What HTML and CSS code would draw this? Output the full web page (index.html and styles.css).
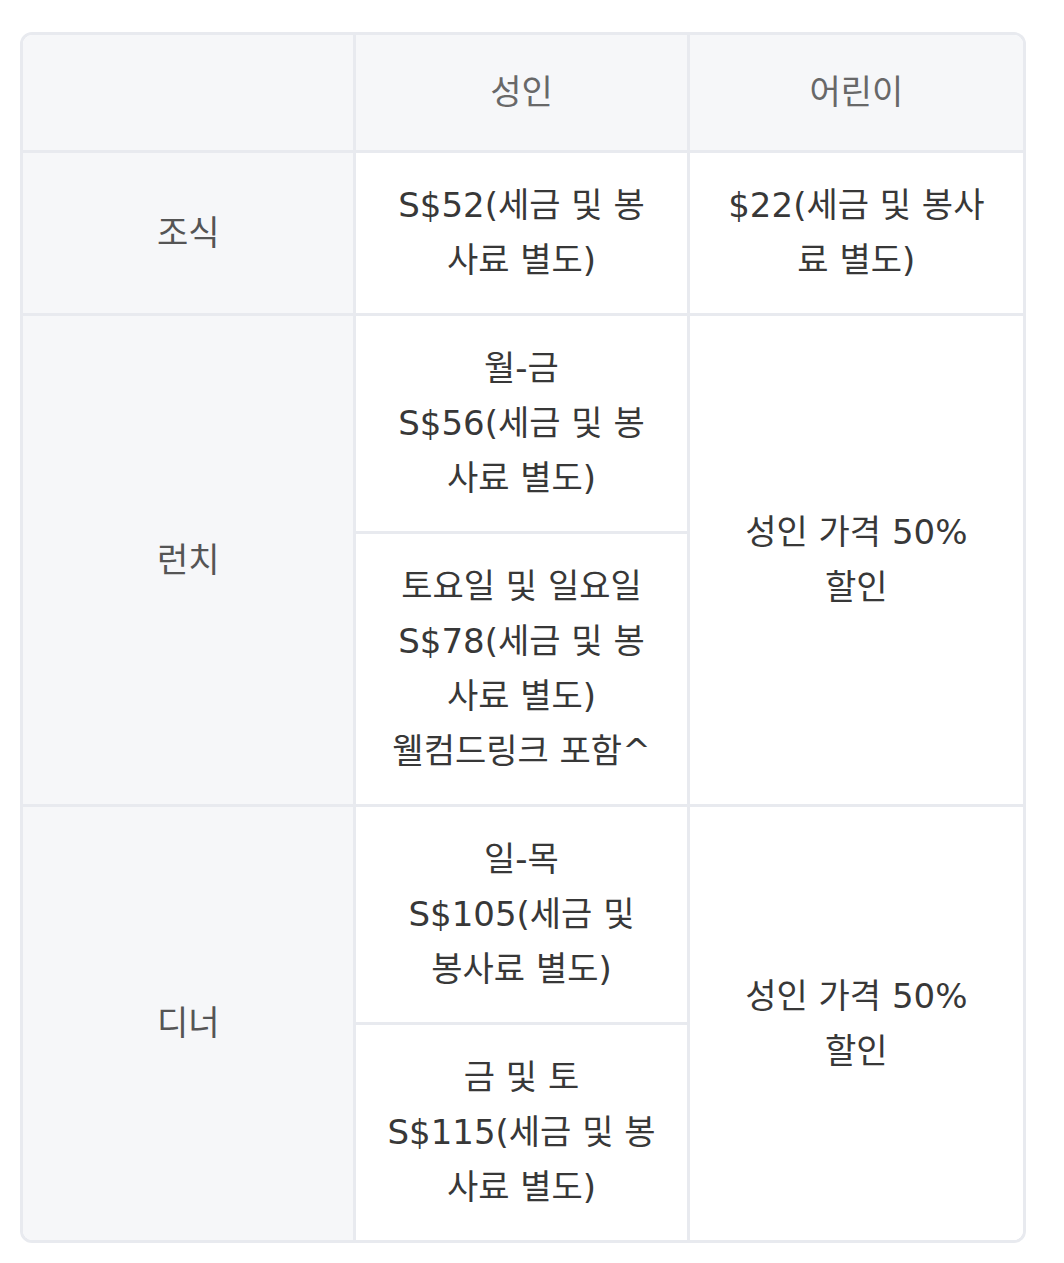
FILE: index.html
```html
<!DOCTYPE html>
<html lang="ko">
<head>
<meta charset="utf-8">
<link rel="stylesheet" href="styles.css">
</head>
<body>
<div class="wrap">
<table class="price">
  <colgroup><col class="c"><col class="c"><col class="c"></colgroup>
  <thead>
    <tr>
      <th class="head"></th>
      <th class="head">성인</th>
      <th class="head last">어린이</th>
    </tr>
  </thead>
  <tbody>
    <tr>
      <th class="meal">조식</th>
      <td>S$52(세금 및 봉<br>사료 별도)</td>
      <td class="last">$22(세금 및 봉사<br>료 별도)</td>
    </tr>
    <tr>
      <th class="meal" rowspan="2">런치</th>
      <td>월-금<br>S$56(세금 및 봉<br>사료 별도)</td>
      <td class="last" rowspan="2">성인 가격 50%<br>할인</td>
    </tr>
    <tr>
      <td>토요일 및 일요일<br>S$78(세금 및 봉<br>사료 별도)<br>웰컴드링크 포함^</td>
    </tr>
    <tr>
      <th class="meal bottom" rowspan="2">디너</th>
      <td>일-목<br>S$105(세금 및<br>봉사료 별도)</td>
      <td class="last bottom" rowspan="2">성인 가격 50%<br>할인</td>
    </tr>
    <tr>
      <td class="bottom">금 및 토<br>S$115(세금 및 봉<br>사료 별도)</td>
    </tr>
  </tbody>
</table>
</div>
</body>
</html>
```

FILE: styles.css
```css
html, body {
  margin: 0;
  padding: 0;
  background: #ffffff;
}
.wrap {
  padding: 32px 38px 20px 20px;
}
.price {
  width: 1006px;
  table-layout: fixed;
  border-collapse: separate;
  border-spacing: 0;
  border: 3px solid #e8eaef;
  border-radius: 12px;
  overflow: hidden;
  font-family: "DejaVu Sans", "Noto Sans CJK KR", sans-serif;
  font-size: 34px;
  line-height: 55px;
  color: #383838;
}
.price th, .price td {
  border-right: 3px solid #e8eaef;
  border-bottom: 3px solid #e8eaef;
  text-align: center;
  vertical-align: middle;
  padding: 25px 10px;
  font-weight: 400;
  white-space: nowrap;
}
.price .last { border-right: none; }
.price .bottom { border-bottom: none; }
.price .head {
  background: #f6f7f9;
  color: #686868;
  padding: 30px 10px;
}
.price .meal {
  background: #f6f7f9;
  color: #555555;
}
.price td { background: #ffffff; }
```
